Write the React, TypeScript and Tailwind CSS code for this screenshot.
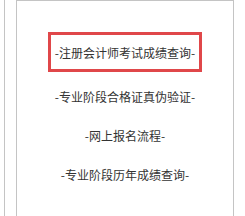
const links = [
  "-专业阶段合格证真伪验证-",
  "-网上报名流程-",
  "-专业阶段历年成绩查询-",
];

export default function App() {
  return (
    <div
      className="flex h-[216px] w-[245px] bg-white pl-[4px] text-[12px] text-[#333]"
      style={{ fontFamily: '"Noto Sans CJK SC", "Noto Sans", sans-serif' }}
    >
      <div className="w-[12px] shrink-0 border-l border-[#c4c4c4]" />
      <div className="flex w-[218px] shrink-0 flex-col items-center border-x border-t border-[#c4c4c4] pt-[31px]">
        <a
          href="#"
          className="flex h-[40px] w-[154px] items-center justify-center border-[3px] border-[#e0474a] pt-[2px] leading-none"
        >
          -注册会计师考试成绩查询-
        </a>
        <div className="mt-[4px] flex flex-col items-center">
          {links.map((label) => (
            <a
              key={label}
              href="#"
              className="flex h-[39px] items-center pt-[2px] leading-none"
            >
              {label}
            </a>
          ))}
        </div>
      </div>
    </div>
  );
}
